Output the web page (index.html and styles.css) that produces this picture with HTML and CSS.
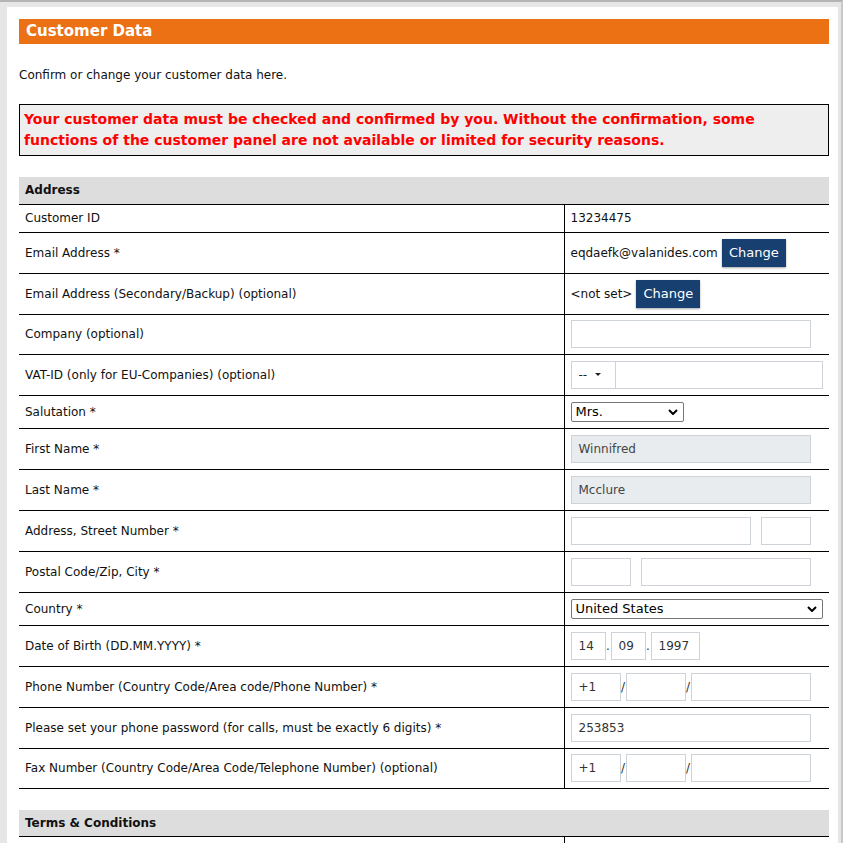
FILE: index.html
```html
<!DOCTYPE html>
<html>
<head>
<meta charset="utf-8">
<title>Customer Data</title>
<link rel="stylesheet" href="styles.css">
</head>
<body>
<div class="frame">
  <div class="panel">
    <h1 class="title">Customer Data</h1>
    <p class="intro">Confirm or change your customer data here.</p>
    <div class="warning">Your customer data must be checked and confirmed by you. Without the confirmation, some functions of the customer panel are not available or limited for security reasons.</div>

    <table class="data">
      <tr class="section"><th colspan="2">Address</th></tr>
      <tr class="short"><td class="lbl">Customer ID</td><td class="val">13234475</td></tr>
      <tr><td class="lbl">Email Address *</td><td class="val"><span class="txt">eqdaefk@valanides.com</span><button class="btn">Change</button></td></tr>
      <tr><td class="lbl">Email Address (Secondary/Backup) (optional)</td><td class="val"><span class="txt">&lt;not set&gt;</span><button class="btn">Change</button></td></tr>
      <tr class="r39"><td class="lbl">Company (optional)</td><td class="val"><span class="in w240"></span></td></tr>
      <tr><td class="lbl">VAT-ID (only for EU-Companies) (optional)</td><td class="val"><span class="vat"><span class="vat-sel">--<span class="caret"></span></span><span class="vat-in"></span></span></td></tr>
      <tr class="sel-row"><td class="lbl">Salutation *</td><td class="val"><span class="select w113">Mrs.<svg class="chev" viewBox="0 0 10 6" width="10" height="6"><path d="M1 1 L5 5 L9 1" fill="none" stroke="#000" stroke-width="2"/></svg></span></td></tr>
      <tr><td class="lbl">First Name *</td><td class="val"><span class="in w240 filled">Winnifred</span></td></tr>
      <tr><td class="lbl">Last Name *</td><td class="val"><span class="in w240 filled">Mcclure</span></td></tr>
      <tr><td class="lbl">Address, Street Number *</td><td class="val"><span class="grp"><span class="in w180"></span><span class="in w50"></span></span></td></tr>
      <tr><td class="lbl">Postal Code/Zip, City *</td><td class="val"><span class="grp"><span class="in w60"></span><span class="in w170"></span></span></td></tr>
      <tr class="sel-row"><td class="lbl">Country *</td><td class="val"><span class="select w252">United States<svg class="chev" viewBox="0 0 10 6" width="10" height="6"><path d="M1 1 L5 5 L9 1" fill="none" stroke="#000" stroke-width="2"/></svg></span></td></tr>
      <tr><td class="lbl">Date of Birth (DD.MM.YYYY) *</td><td class="val"><span class="grp tight"><span class="in w35">14</span><span class="sep">.</span><span class="in w35">09</span><span class="sep">.</span><span class="in w49">1997</span></span></td></tr>
      <tr><td class="lbl">Phone Number (Country Code/Area code/Phone Number) *</td><td class="val"><span class="grp tight"><span class="in w50">+1</span><span class="sep">/</span><span class="in w60"></span><span class="sep">/</span><span class="in w120"></span></span></td></tr>
      <tr><td class="lbl">Please set your phone password (for calls, must be exactly 6 digits) *</td><td class="val"><span class="in w240">253853</span></td></tr>
      <tr class="r39"><td class="lbl">Fax Number (Country Code/Area Code/Telephone Number) (optional)</td><td class="val"><span class="grp tight"><span class="in w50">+1</span><span class="sep">/</span><span class="in w60"></span><span class="sep">/</span><span class="in w120"></span></span></td></tr>
    </table>

    <table class="data terms">
      <tr class="section"><th colspan="2">Terms &amp; Conditions</th></tr>
      <tr class="short"><td class="lbl">&nbsp;</td><td class="val">&nbsp;</td></tr>
    </table>
  </div>
</div>
</body>
</html>
```
FILE: styles.css
```css
html, body {
  margin: 0;
  padding: 0;
  background: #e6e6e6;
  height: 843px;
  overflow: hidden;
}
body {
  font-family: "DejaVu Sans", "Liberation Sans", sans-serif;
  font-size: 12px;
  color: #111;
}
.frame {
  border-top: 2px solid #b4b4b4;
  border-right: 2px solid #c8c8c8;
  width: 843px;
  height: 843px;
  padding-top: 5px;
  box-sizing: border-box;
}
.panel {
  background: #fff;
  margin-left: 7px;
  width: 831px;
  padding: 12px 9px 0 12px;
  box-sizing: border-box;
  height: 900px;
}
.title {
  margin: 0;
  background: #ec7014;
  color: #fff;
  font-size: 15px;
  font-weight: bold;
  height: 25px;
  line-height: 25px;
  padding-left: 7px;
}
.intro {
  margin: 23px 0 0;
  line-height: 16px;
  height: 16px;
}
.warning {
  margin-top: 21px;
  border: 1px solid #000;
  background: #eeeeee;
  color: #ff0000;
  font-weight: bold;
  font-size: 14px;
  line-height: 21px;
  padding: 4px 60px 4px 4px;
}
.data {
  margin-top: 21px;
  width: 810px;
  border-collapse: collapse;
}
.data th {
  background: #dddddd;
  text-align: left;
  font-weight: bold;
  height: 27px;
  padding: 0 6px;
  border-bottom: 1px solid #000;
  box-sizing: border-box;
}
.data td {
  border-bottom: 1px solid #000;
  padding: 6px 6px;
  height: 40px;
  box-sizing: border-box;
  vertical-align: middle;
  line-height: 14px;
}
.data tr.short td { height: 28px; padding-top: 5px; padding-bottom: 5px; }
.data tr.r39 td { height: 40px; padding-top: 5px; padding-bottom: 5px; }
.data tr.sel-row td { height: 33px; }
.data td.lbl { width: 545px; padding-left: 6px; }
.data td.val { border-left: 1px solid #000; padding-left: 6px; }
.terms { margin-top: 21px; }
.terms td { border-bottom: none; }

.txt { vertical-align: middle; }
.btn {
  font-family: inherit;
  font-size: 13px;
  background: #173f6f;
  color: #fff;
  border: none;
  height: 28px;
  width: 64px;
  padding: 0;
  margin-left: 4px;
  box-shadow: 0 1px 2px rgba(0,0,0,0.35);
  vertical-align: middle;
  border-radius: 0;
}

.in {
  display: inline-block;
  box-sizing: border-box;
  height: 28px;
  line-height: 26px;
  border: 1px solid #ced3d9;
  padding: 0 7px;
  vertical-align: middle;
  color: #333;
  background: #fff;
}
.in.filled { background: #e9ecef; color: #444; }
.w240 { width: 240px; }
.w180 { width: 180px; }
.w170 { width: 170px; }
.w120 { width: 120px; }
.w60 { width: 60px; }
.w50 { width: 50px; }
.w49 { width: 49px; }
.w35 { width: 35px; }

.grp { display: inline-flex; gap: 10px; align-items: center; vertical-align: middle; }
.grp.tight { gap: 0; }
.sep { display: inline-block; width: 5px; text-align: center; color: #333; line-height: 26px; }

.vat {
  display: inline-flex;
  width: 252px;
  height: 28px;
  border: 1px solid #ced3d9;
  box-sizing: border-box;
  vertical-align: middle;
}
.vat-sel {
  width: 44px;
  border-right: 1px solid #ced3d9;
  display: flex;
  align-items: center;
  padding-left: 7px;
  box-sizing: border-box;
  color: #222;
  gap: 8px;
}
.caret {
  width: 0; height: 0;
  border-left: 3px solid transparent;
  border-right: 3px solid transparent;
  border-top: 3px solid #222;
}
.vat-in { flex: 1; }

.select {
  display: inline-flex;
  align-items: center;
  justify-content: space-between;
  box-sizing: border-box;
  height: 20px;
  border: 1px solid #767676;
  border-radius: 2px;
  padding: 0 5px 0 4px;
  font-size: 13px;
  vertical-align: middle;
  color: #000;
  background: #fff;
}
.w113 { width: 113px; }
.w252 { width: 252px; }
.chev { display: block; }
```
